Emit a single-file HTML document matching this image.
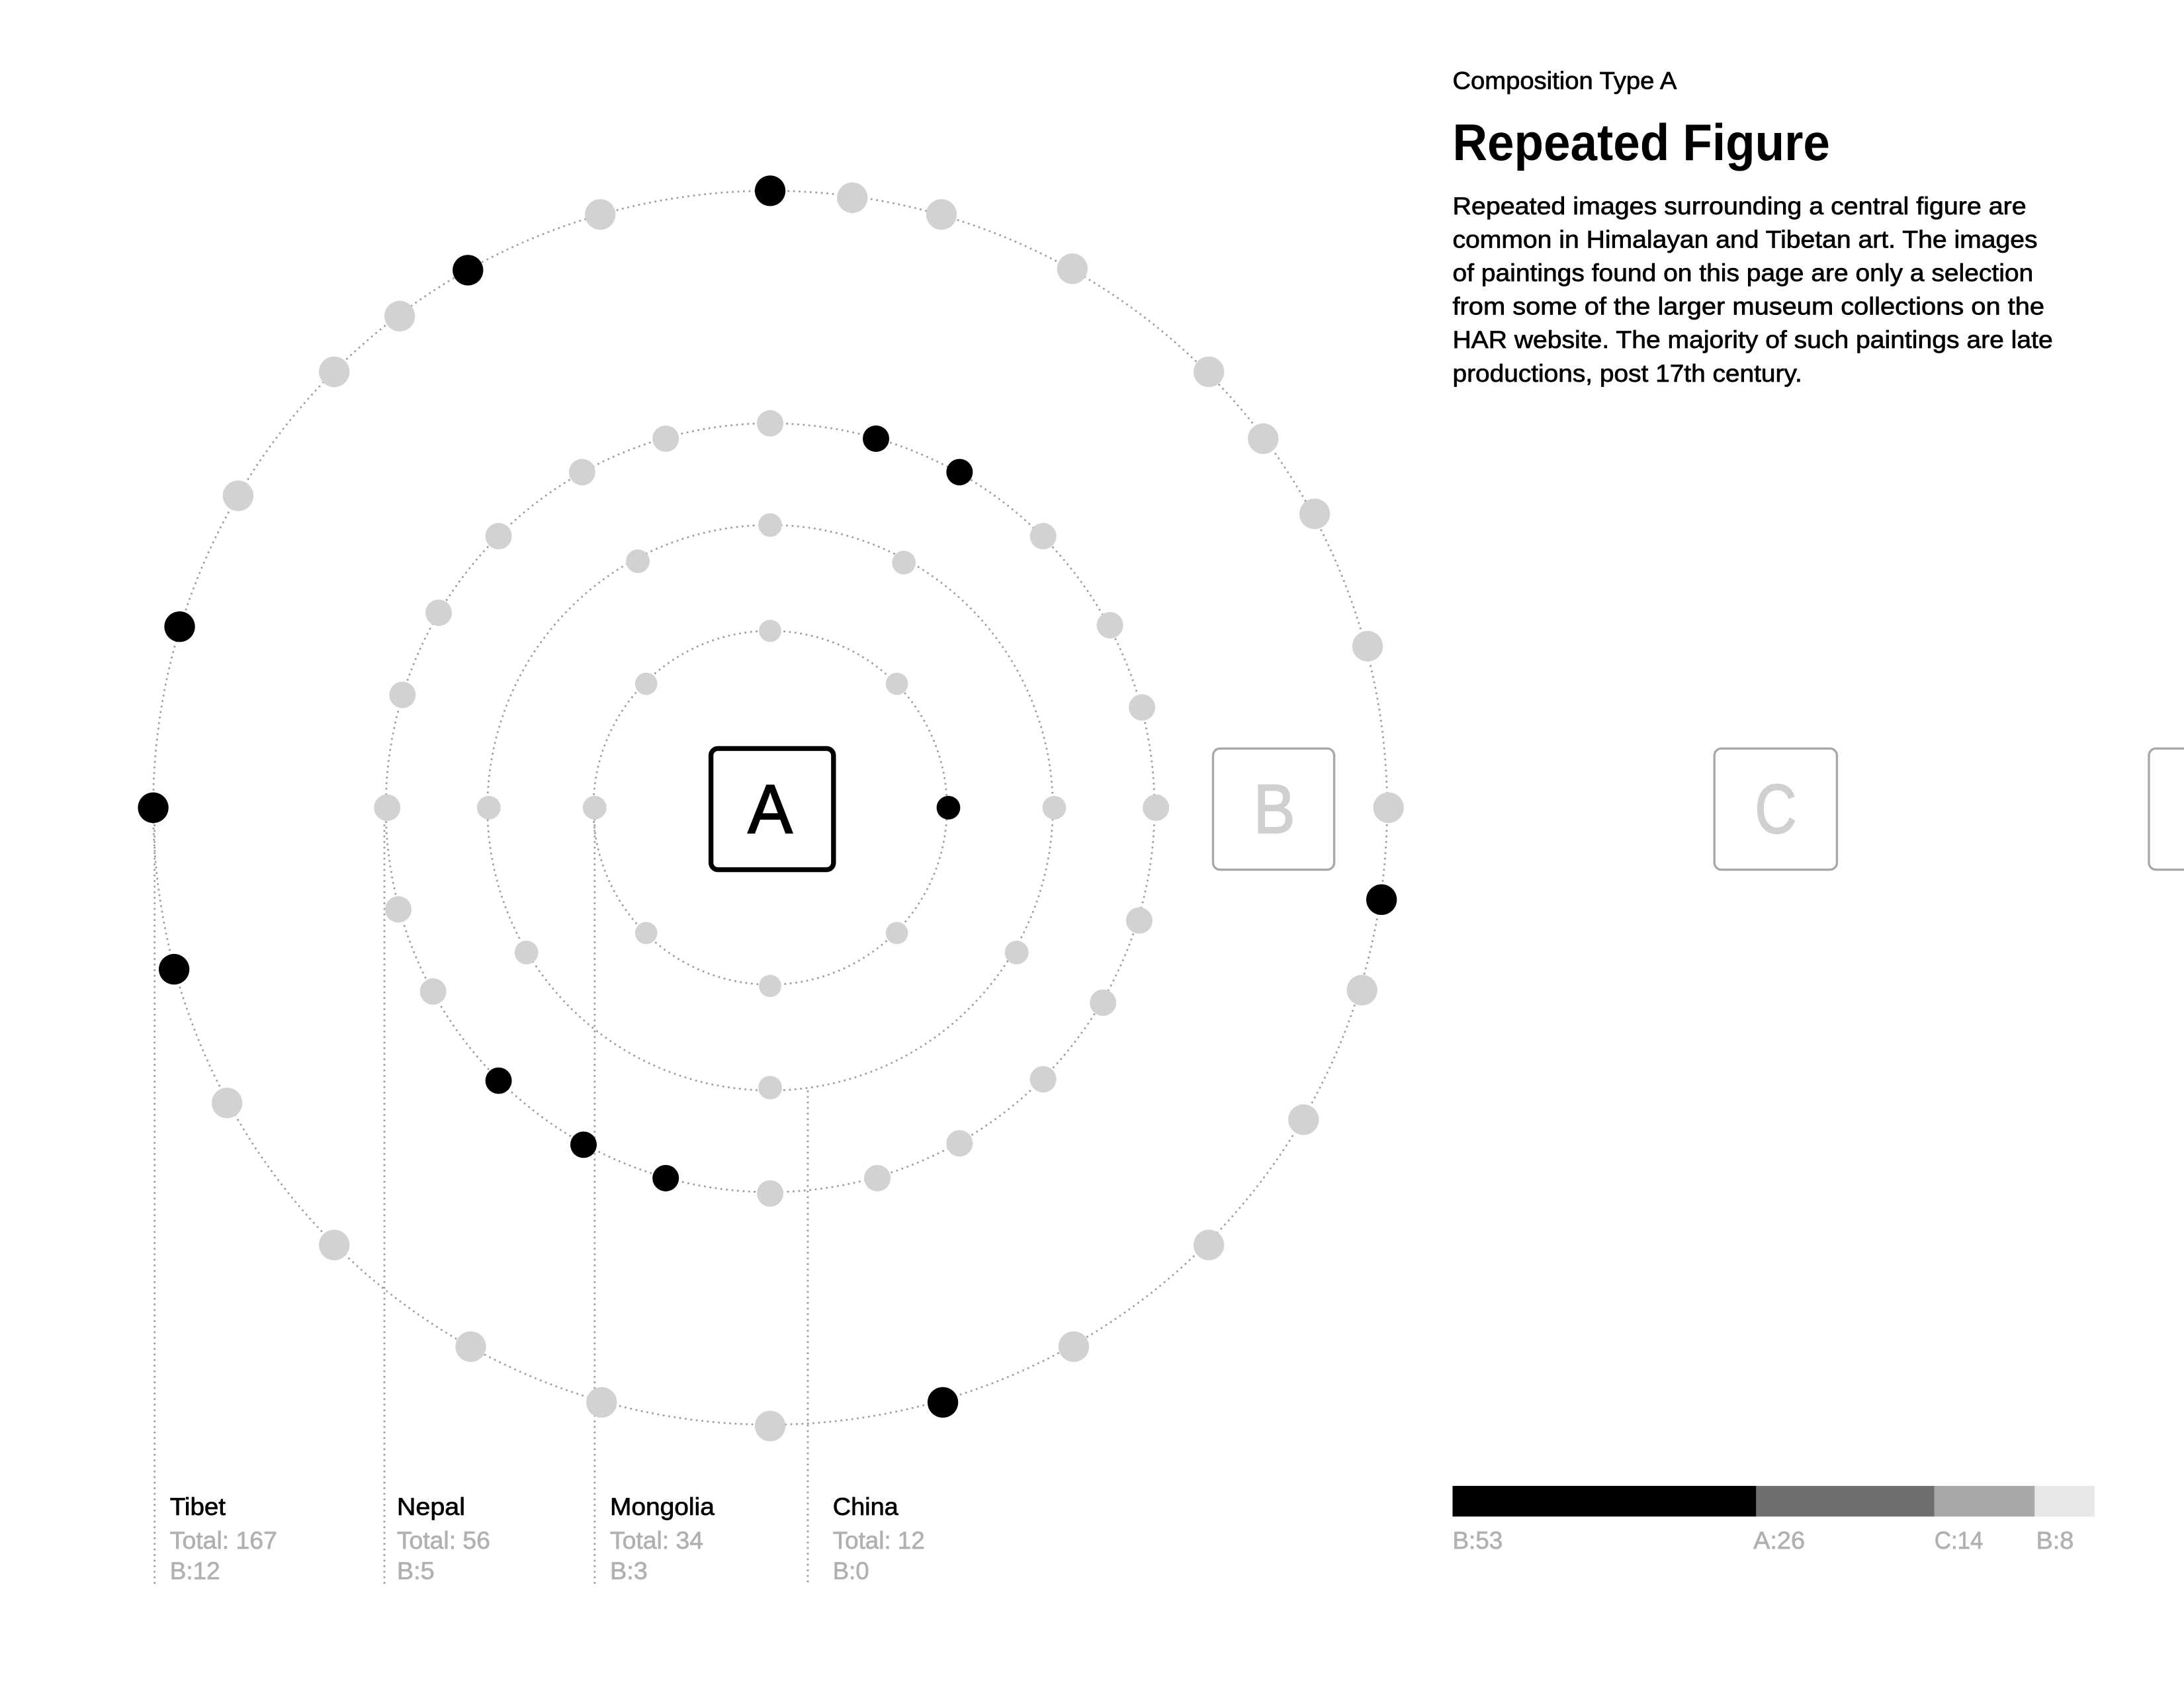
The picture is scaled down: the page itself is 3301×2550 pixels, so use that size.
<!DOCTYPE html>
<html><head><meta charset="utf-8"><style>
html,body{margin:0;padding:0;background:#fff;width:3301px;height:2550px;overflow:hidden}
svg{display:block}
text{font-family:"Liberation Sans",sans-serif}
</style></head><body>
<svg width="3301" height="2550" viewBox="0 0 1568.2 1211.4" preserveAspectRatio="none" xmlns="http://www.w3.org/2000/svg">
<g fill="none" stroke="#9d9ea0" stroke-width="1.3" stroke-dasharray="1.3 2.7">
<circle cx="553" cy="580" r="127"/>
<circle cx="553" cy="580" r="203"/>
<circle cx="553" cy="580" r="276"/>
<circle cx="553" cy="580" r="443"/>
<line x1="111" y1="580" x2="111" y2="1140"/>
<line x1="276" y1="580" x2="276" y2="1140"/>
<line x1="427" y1="580" x2="427" y2="1140"/>
<line x1="580" y1="783" x2="580" y2="1138"/>
</g>
<g fill="#d1d2d4">
<circle cx="553" cy="453" r="8"/><circle cx="644" cy="491" r="8"/><circle cx="644" cy="670" r="8"/><circle cx="553" cy="708" r="8"/><circle cx="464" cy="670" r="8"/><circle cx="427" cy="580" r="8.5"/><circle cx="464" cy="491" r="8"/>
<circle cx="553" cy="377" r="8.5"/><circle cx="649" cy="404" r="8.5"/><circle cx="757" cy="580" r="8.5"/><circle cx="730" cy="684" r="8.5"/><circle cx="553" cy="781" r="8.5"/><circle cx="378" cy="684" r="8.5"/><circle cx="351" cy="580" r="8.5"/><circle cx="458" cy="403" r="8.5"/>
<circle cx="553" cy="304" r="9.5"/><circle cx="749" cy="385" r="9.5"/><circle cx="797" cy="449" r="9.5"/><circle cx="820" cy="508" r="9.5"/><circle cx="830" cy="580" r="9.5"/><circle cx="818" cy="661" r="9.5"/><circle cx="792" cy="720" r="9.5"/><circle cx="749" cy="775" r="9.5"/><circle cx="689" cy="821" r="9.5"/><circle cx="630" cy="846" r="9.5"/><circle cx="553" cy="857" r="9.5"/><circle cx="311" cy="712" r="9.5"/><circle cx="286" cy="653" r="9.5"/><circle cx="278" cy="580" r="9.5"/><circle cx="289" cy="499" r="9.5"/><circle cx="315" cy="440" r="9.5"/><circle cx="358" cy="385" r="9.5"/><circle cx="418" cy="339" r="9.5"/><circle cx="478" cy="315" r="9.5"/>
<circle cx="612" cy="142" r="11"/><circle cx="676" cy="154" r="11"/><circle cx="770" cy="193" r="11"/><circle cx="868" cy="267" r="11"/><circle cx="907" cy="315" r="11"/><circle cx="944" cy="369" r="11"/><circle cx="982" cy="464" r="11"/><circle cx="997" cy="580" r="11"/><circle cx="978" cy="711" r="11"/><circle cx="936" cy="804" r="11"/><circle cx="868" cy="894" r="11"/><circle cx="771" cy="967" r="11"/><circle cx="553" cy="1024" r="11"/><circle cx="432" cy="1007" r="11"/><circle cx="338" cy="967" r="11"/><circle cx="240" cy="894" r="11"/><circle cx="163" cy="792" r="11"/><circle cx="171" cy="356" r="11"/><circle cx="240" cy="267" r="11"/><circle cx="287" cy="227" r="11"/><circle cx="431" cy="154" r="11"/>
</g>
<g fill="#000">
<circle cx="681" cy="580" r="8.5"/>
<circle cx="629" cy="315" r="9.5"/><circle cx="689" cy="339" r="9.5"/><circle cx="478" cy="846" r="9.5"/><circle cx="419" cy="822" r="9.5"/><circle cx="358" cy="776" r="9.5"/>
<circle cx="553" cy="137" r="11"/><circle cx="992" cy="646" r="11"/><circle cx="677" cy="1007" r="11"/><circle cx="125" cy="696" r="11"/><circle cx="110" cy="580" r="11"/><circle cx="129" cy="450" r="11"/><circle cx="336" cy="194" r="11"/>
</g>
<rect x="510.5" y="537.5" width="88" height="87" rx="5" fill="#fff" stroke="#000" stroke-width="3.5"/>
<text x="553" y="598" font-size="50" text-anchor="middle" fill="#000" stroke="#000" stroke-width="1" textLength="32" lengthAdjust="spacingAndGlyphs">A</text>
<g fill="#fff" stroke="#a7a8aa" stroke-width="1.6">
<rect x="871" y="537.5" width="87" height="87" rx="5"/>
<rect x="1231" y="537.5" width="88" height="87" rx="5"/>
<rect x="1543" y="537.5" width="88" height="87" rx="5"/>
</g>
<text x="915" y="598" font-size="50" text-anchor="middle" fill="#cfd0d2" stroke="#cfd0d2" stroke-width="1" textLength="30" lengthAdjust="spacingAndGlyphs">B</text>
<text x="1275" y="598" font-size="50" text-anchor="middle" fill="#cfd0d2" stroke="#cfd0d2" stroke-width="1" textLength="30" lengthAdjust="spacingAndGlyphs">C</text>
<g font-size="17.5" stroke-width="0.35">
<text x="122" y="1088" fill="#000" stroke="#000" textLength="40" lengthAdjust="spacingAndGlyphs">Tibet</text>
<text x="122" y="1112" fill="#b0b1b3" stroke="#b0b1b3" textLength="77" lengthAdjust="spacingAndGlyphs">Total: 167</text>
<text x="122" y="1134" fill="#b0b1b3" stroke="#b0b1b3" textLength="36" lengthAdjust="spacingAndGlyphs">B:12</text>
<text x="285" y="1088" fill="#000" stroke="#000" textLength="49" lengthAdjust="spacingAndGlyphs">Nepal</text>
<text x="285" y="1112" fill="#b0b1b3" stroke="#b0b1b3" textLength="67" lengthAdjust="spacingAndGlyphs">Total: 56</text>
<text x="285" y="1134" fill="#b0b1b3" stroke="#b0b1b3" textLength="27" lengthAdjust="spacingAndGlyphs">B:5</text>
<text x="438" y="1088" fill="#000" stroke="#000" textLength="75" lengthAdjust="spacingAndGlyphs">Mongolia</text>
<text x="438" y="1112" fill="#b0b1b3" stroke="#b0b1b3" textLength="67" lengthAdjust="spacingAndGlyphs">Total: 34</text>
<text x="438" y="1134" fill="#b0b1b3" stroke="#b0b1b3" textLength="27" lengthAdjust="spacingAndGlyphs">B:3</text>
<text x="598" y="1088" fill="#000" stroke="#000" textLength="47" lengthAdjust="spacingAndGlyphs">China</text>
<text x="598" y="1112" fill="#b0b1b3" stroke="#b0b1b3" textLength="66" lengthAdjust="spacingAndGlyphs">Total: 12</text>
<text x="598" y="1134" fill="#b0b1b3" stroke="#b0b1b3" textLength="26" lengthAdjust="spacingAndGlyphs">B:0</text>
</g>
<text x="1043" y="64" font-size="17.5" fill="#000" stroke="#000" stroke-width="0.35" textLength="161" lengthAdjust="spacingAndGlyphs">Composition Type A</text>
<text x="1043" y="115" font-size="37" fill="#000" font-weight="bold" textLength="271" lengthAdjust="spacingAndGlyphs">Repeated Figure</text>
<g font-size="17.5" fill="#000" stroke="#000" stroke-width="0.35">
<text x="1043" y="154" textLength="412" lengthAdjust="spacingAndGlyphs">Repeated images surrounding a central figure are</text>
<text x="1043" y="178" textLength="420" lengthAdjust="spacingAndGlyphs">common in Himalayan and Tibetan art. The images</text>
<text x="1043" y="202" textLength="417" lengthAdjust="spacingAndGlyphs">of paintings found on this page are only a selection</text>
<text x="1043" y="226" textLength="425" lengthAdjust="spacingAndGlyphs">from some of the larger museum collections on the</text>
<text x="1043" y="250" textLength="431" lengthAdjust="spacingAndGlyphs">HAR website. The majority of such paintings are late</text>
<text x="1043" y="274" textLength="251" lengthAdjust="spacingAndGlyphs">productions, post 17th century.</text>
</g>
<rect x="1043" y="1067" width="218" height="22" fill="#000"/>
<rect x="1261" y="1067" width="128" height="22" fill="#6d6e70"/>
<rect x="1389" y="1067" width="72" height="22" fill="#a7a8aa"/>
<rect x="1461" y="1067" width="43" height="22" fill="#e6e7e8"/>
<g font-size="17.5" fill="#b0b1b3" stroke="#b0b1b3" stroke-width="0.35">
<text x="1043" y="1112" textLength="36" lengthAdjust="spacingAndGlyphs">B:53</text>
<text x="1259" y="1112" textLength="37" lengthAdjust="spacingAndGlyphs">A:26</text>
<text x="1389" y="1112" textLength="35" lengthAdjust="spacingAndGlyphs">C:14</text>
<text x="1462" y="1112" textLength="27" lengthAdjust="spacingAndGlyphs">B:8</text>
</g>
</svg>
</body></html>
